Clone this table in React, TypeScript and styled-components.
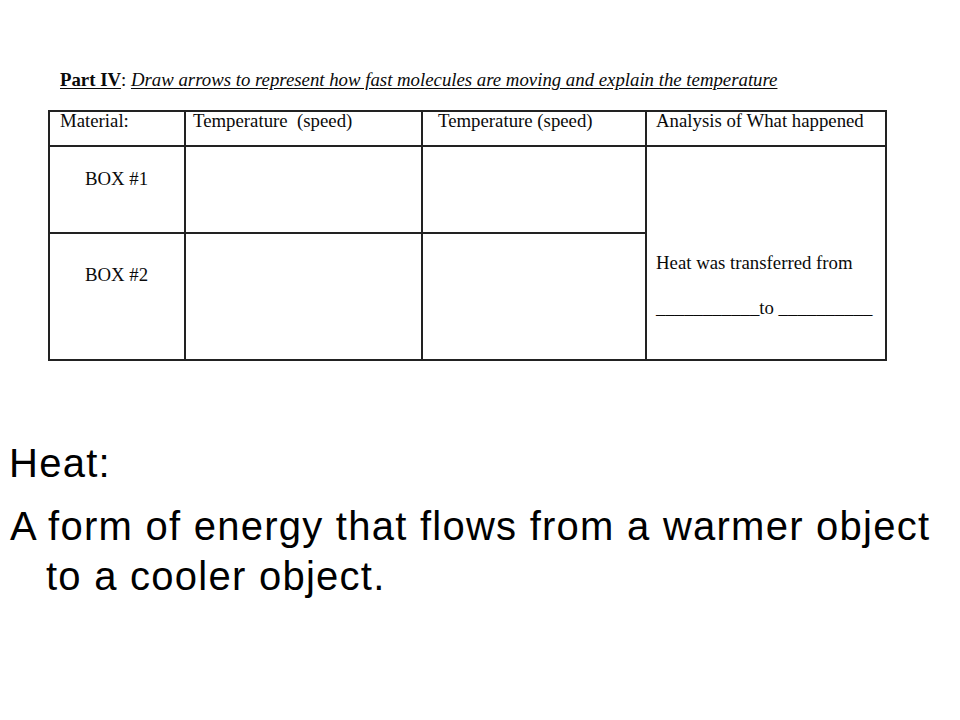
import React from "react";
import styled, { createGlobalStyle } from "styled-components";

const Global = createGlobalStyle`
  html, body { margin: 0; padding: 0; background: #ffffff; }
  body { width: 960px; height: 720px; overflow: hidden; }
`;

const Page = styled.div`
  width: 960px;
  height: 720px;
  box-sizing: border-box;
  padding-top: 71px;
  background: #ffffff;
  color: #000;
`;

const Title = styled.div`
  padding-left: 60px;
  font-family: "Liberation Serif", "Times New Roman", serif;
  font-size: 18.8px;
  line-height: 18.5px;
  white-space: pre;
  color: #0a0a0a;
`;

const Bold = styled.span`
  font-weight: 700;
  text-decoration: underline;
  text-underline-offset: 2px;
`;

const Italic = styled.span`
  font-style: italic;
  text-decoration: underline;
  text-underline-offset: 2px;
`;

const Table = styled.div`
  margin: 20.5px 0 0 48px;
  width: 839px;
  box-sizing: border-box;
  display: grid;
  grid-template-columns: 134px 235px 222px 238px;
  grid-template-rows: 33px 85px 125px;
  gap: 2px;
  padding: 2px;
  background: #222222;
`;

const Cell = styled.div<{ $padTop?: number; $padLeft?: number; $span?: boolean }>`
  background: #ffffff;
  box-sizing: border-box;
  padding-top: ${(p) => p.$padTop ?? 0}px;
  padding-left: ${(p) => p.$padLeft ?? 0}px;
  font-family: "Liberation Serif", "Times New Roman", serif;
  font-size: 18.8px;
  line-height: 18.5px;
  white-space: pre;
  color: #0a0a0a;
  ${(p) => (p.$span ? "grid-row: 2 / span 2; grid-column: 4;" : "")}
`;

const AnalysisLine = styled.div<{ $gap?: number }>`
  margin-top: ${(p) => p.$gap ?? 0}px;
`;

const Definition = styled.div`
  margin-top: 77px;
  font-family: "Liberation Sans", Arial, sans-serif;
  font-size: 40px;
  line-height: 50px;
  letter-spacing: 1.25px;
  color: #000;
`;

const Term = styled.div`
  padding-left: 9px;
`;

const Meaning = styled.div`
  margin-top: 13px;
  width: 940px;
  box-sizing: border-box;
  padding-left: 46px;
  text-indent: -36px;
`;

export default function App() {
  return (
    <>
      <Global />
      <Page>
        <Title>
          <Bold>Part IV</Bold>:{" "}
          <Italic>Draw arrows to represent how fast molecules are moving and explain the temperature</Italic>
        </Title>
        <Table>
          <Cell $padLeft={10}>Material:</Cell>
          <Cell $padLeft={7}>{"Temperature  (speed)"}</Cell>
          <Cell $padLeft={15}>Temperature (speed)</Cell>
          <Cell $padLeft={9}>Analysis of What happened</Cell>

          <Cell $padLeft={35} $padTop={23}>BOX #1</Cell>
          <Cell />
          <Cell />
          <Cell $span $padLeft={9} $padTop={107}>
            <AnalysisLine>Heat was transferred from</AnalysisLine>
            <AnalysisLine $gap={26}>{"___________to __________"}</AnalysisLine>
          </Cell>

          <Cell $padLeft={35} $padTop={32}>BOX #2</Cell>
          <Cell />
          <Cell />
        </Table>
        <Definition>
          <Term>Heat:</Term>
          <Meaning>A form of energy that flows from a warmer object to a cooler object.</Meaning>
        </Definition>
      </Page>
    </>
  );
}
